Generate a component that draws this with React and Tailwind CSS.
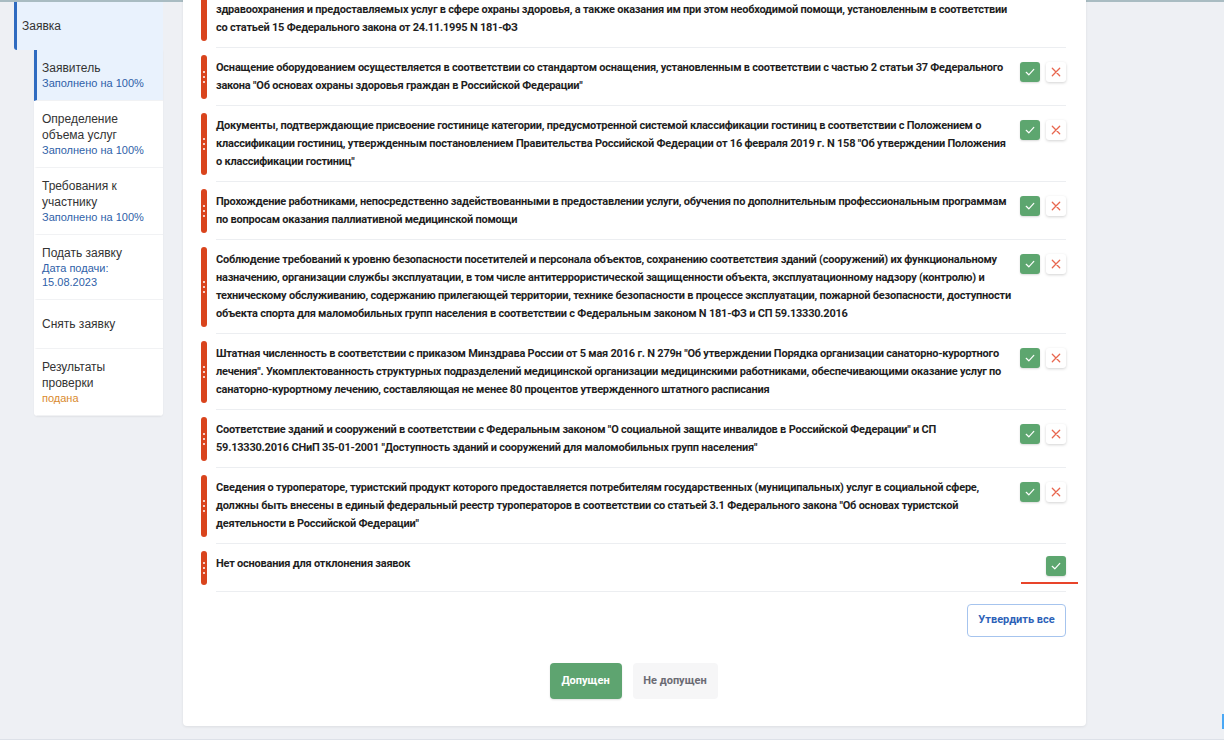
import React from "react";

const rows = [
  {
    lines: [
      "здравоохранения и предоставляемых услуг в сфере охраны здоровья, а также оказания им при этом необходимой помощи, установленным в соответствии",
      "со статьей 15 Федерального закона от 24.11.1995 N 181-ФЗ",
    ],
    dots: false,
    buttons: false,
  },
  {
    lines: [
      "Оснащение оборудованием осуществляется в соответствии со стандартом оснащения, установленным в соответствии с частью 2 статьи 37 Федерального",
      "закона \"Об основах охраны здоровья граждан в Российской Федерации\"",
    ],
    dots: true,
    buttons: true,
  },
  {
    lines: [
      "Документы, подтверждающие присвоение гостинице категории, предусмотренной системой классификации гостиниц в соответствии с Положением о",
      "классификации гостиниц, утвержденным постановлением Правительства Российской Федерации от 16 февраля 2019 г. N 158 \"Об утверждении Положения",
      "о классификации гостиниц\"",
    ],
    dots: true,
    buttons: true,
  },
  {
    lines: [
      "Прохождение работниками, непосредственно задействованными в предоставлении услуги, обучения по дополнительным профессиональным программам",
      "по вопросам оказания паллиативной медицинской помощи",
    ],
    dots: true,
    buttons: true,
  },
  {
    lines: [
      "Соблюдение требований к уровню безопасности посетителей и персонала объектов, сохранению соответствия зданий (сооружений) их функциональному",
      "назначению, организации службы эксплуатации, в том числе антитеррористической защищенности объекта, эксплуатационному надзору (контролю) и",
      "техническому обслуживанию, содержанию прилегающей территории, технике безопасности в процессе эксплуатации, пожарной безопасности, доступности",
      "объекта спорта для маломобильных групп населения в соответствии с Федеральным законом N 181-ФЗ и СП 59.13330.2016",
    ],
    dots: true,
    buttons: true,
  },
  {
    lines: [
      "Штатная численность в соответствии с приказом Минздрава России от 5 мая 2016 г. N 279н \"Об утверждении Порядка организации санаторно-курортного",
      "лечения\". Укомплектованность структурных подразделений медицинской организации медицинскими работниками, обеспечивающими оказание услуг по",
      "санаторно-курортному лечению, составляющая не менее 80 процентов утвержденного штатного расписания",
    ],
    dots: true,
    buttons: true,
  },
  {
    lines: [
      "Соответствие зданий и сооружений в соответствии с Федеральным законом \"О социальной защите инвалидов в Российской Федерации\" и СП",
      "59.13330.2016 СНиП 35-01-2001 \"Доступность зданий и сооружений для маломобильных групп населения\"",
    ],
    dots: true,
    buttons: true,
  },
  {
    lines: [
      "Сведения о туроператоре, туристский продукт которого предоставляется потребителям государственных (муниципальных) услуг в социальной сфере,",
      "должны быть внесены в единый федеральный реестр туроператоров в соответствии со статьей 3.1 Федерального закона \"Об основах туристской",
      "деятельности в Российской Федерации\"",
    ],
    dots: true,
    buttons: true,
  },
  {
    lines: ["Нет основания для отклонения заявок"],
    dots: true,
    buttons: false,
    single: true,
  },
];

const MAIN_FONT = { fontFamily: 'Roboto, "Liberation Sans", sans-serif' };

function CheckIcon() {
  return (
    <svg width="12" height="12" viewBox="0 0 12 12" fill="none">
      <path d="M2.2 6.3 L4.8 8.8 L9.8 3.4" stroke="white" strokeWidth="1.2" strokeLinecap="round" strokeLinejoin="round" />
    </svg>
  );
}

function XIcon() {
  return (
    <svg width="12" height="12" viewBox="0 0 12 12" fill="none">
      <path d="M2.3 2.3 L9.7 9.7 M9.7 2.3 L2.3 9.7" stroke="#e8674f" strokeWidth="1.3" strokeLinecap="round" />
    </svg>
  );
}

function GreenCheck() {
  return (
    <div className="w-[20px] h-[20px] rounded-[3px] bg-[#5da66f] flex items-center justify-center shadow-[0_1px_2px_rgba(0,0,0,0.15)]">
      <CheckIcon />
    </div>
  );
}

function RedX() {
  return (
    <div className="w-[20px] h-[20px] rounded-[3px] bg-white flex items-center justify-center shadow-[0_1px_3px_rgba(0,0,0,0.18)]">
      <XIcon />
    </div>
  );
}

function Row({ row }) {
  return (
    <div className="flex items-stretch">
      <div className="w-[6px] shrink-0 pt-[7px] pb-[7px]">
        <div className="h-full rounded-[3px] bg-[#d9441d] flex flex-col items-center justify-center gap-[3px]">
          {row.dots && (
            <>
              <div className="w-[2px] h-[2px] rounded-full bg-white" />
              <div className="w-[2px] h-[2px] rounded-full bg-white" />
              <div className="w-[2px] h-[2px] rounded-full bg-white" />
            </>
          )}
        </div>
      </div>
      <div className="flex-1 ml-[9px] border-b border-[#eceef1] pt-[7px] pb-[6px] flex">
        <div
          className="py-1 text-[11px] leading-[18px] font-bold tracking-[-0.22px] text-[#1f1f1f] whitespace-nowrap"
          style={MAIN_FONT}
        >
          {row.lines.map((l, i) => (
            <div key={i}>{l}</div>
          ))}
        </div>
        {row.buttons && (
          <div className="ml-auto shrink-0 pt-[7px] flex items-start gap-[6px]">
            <GreenCheck />
            <RedX />
          </div>
        )}
        {row.single && (
          <div className="ml-auto shrink-0 pt-[5px] pb-[9px] flex flex-col items-end">
            <div className="relative">
              <GreenCheck />
              <div className="absolute left-[-25px] top-[26px] w-[57px] h-[2px] bg-[#e8442a]" />
            </div>
          </div>
        )}
      </div>
    </div>
  );
}

function SideItem({ active, title, sub, subColor = "text-[#2f5fa8]", center }) {
  return (
    <div
      className={
        "border-l-[3px] pl-[5px] pr-2 border-b border-b-[#f1f2f4] flex flex-col " +
        (active ? "border-l-[#2f6bc0] bg-[#e9f2fd] " : "border-l-transparent bg-white ") +
        (center ? "justify-center h-[49px]" : "py-[10px]")
      }
    >
      {title.map((t, i) => (
        <div key={i} className="text-[12px] leading-[16px] text-[#333]">
          {t}
        </div>
      ))}
      {sub &&
        sub.map((s, i) => (
          <div key={i} className={"text-[11px] leading-[14px] " + subColor}>
            {s}
          </div>
        ))}
    </div>
  );
}

export default function App() {
  return (
    <div
      className="w-[1224px] h-[740px] overflow-hidden bg-[#eef0f4] relative flex flex-col"
      style={{ fontFamily: '"Liberation Sans", Arial, sans-serif' }}
    >
      <div className="h-[2px] bg-[#a9bcc2] shrink-0" />
      <div className="flex items-start flex-1">
        <div className="ml-[14px] w-[149px] shrink-0">
          <div className="h-[48px] border-l-[3px] border-[#2f6bc0] bg-[#e9f2fd] rounded-bl-[3px] pl-[5px] flex items-center text-[12px] text-[#333]">
            Заявка
          </div>
          <div className="ml-[20px] bg-white rounded-b-[4px] shadow-[0_1px_2px_rgba(0,0,0,0.06)] overflow-hidden">
            <SideItem active title={["Заявитель"]} sub={["Заполнено на 100%"]} />
            <SideItem title={["Определение", "объема услуг"]} sub={["Заполнено на 100%"]} />
            <SideItem title={["Требования к", "участнику"]} sub={["Заполнено на 100%"]} />
            <SideItem title={["Подать заявку"]} sub={["Дата подачи:", "15.08.2023"]} />
            <SideItem title={["Снять заявку"]} center />
            <SideItem title={["Результаты", "проверки"]} sub={["подана"]} subColor="text-[#d98a2e]" />
          </div>
        </div>
        <div className="ml-[20px] w-[903px] -mt-[12px] bg-white rounded-[4px] shadow-[0_1px_3px_rgba(0,0,0,0.08)] pl-[18px] pr-[20px] pb-[27px]">
          {rows.map((r, i) => (
            <Row key={i} row={r} />
          ))}
          <div className="flex justify-end mt-[12px]">
            <button
              className="h-[33px] w-[99px] rounded-[4px] border border-[#a6c4ee] bg-white text-[11px] font-bold text-[#2d62b8]"
              style={MAIN_FONT}
            >
              Утвердить все
            </button>
          </div>
          <div className="flex justify-center gap-[11px] mt-[26px]">
            <button
              className="h-[36px] w-[72px] rounded-[4px] bg-[#5ea470] text-white text-[11px] font-bold shadow-[0_1px_2px_rgba(0,0,0,0.12)]"
              style={MAIN_FONT}
            >
              Допущен
            </button>
            <button
              className="h-[36px] w-[85px] rounded-[4px] bg-[#f6f6f7] text-[#6b6b73] text-[11px] font-bold"
              style={MAIN_FONT}
            >
              Не допущен
            </button>
          </div>
        </div>
      </div>
      <div className="absolute left-0 right-0 bottom-0 h-[1px] bg-[#dde1e8]" />
      <div className="absolute right-0 top-[714px] w-[2px] h-[15px] bg-[#4aa8f5]" />
    </div>
  );
}
